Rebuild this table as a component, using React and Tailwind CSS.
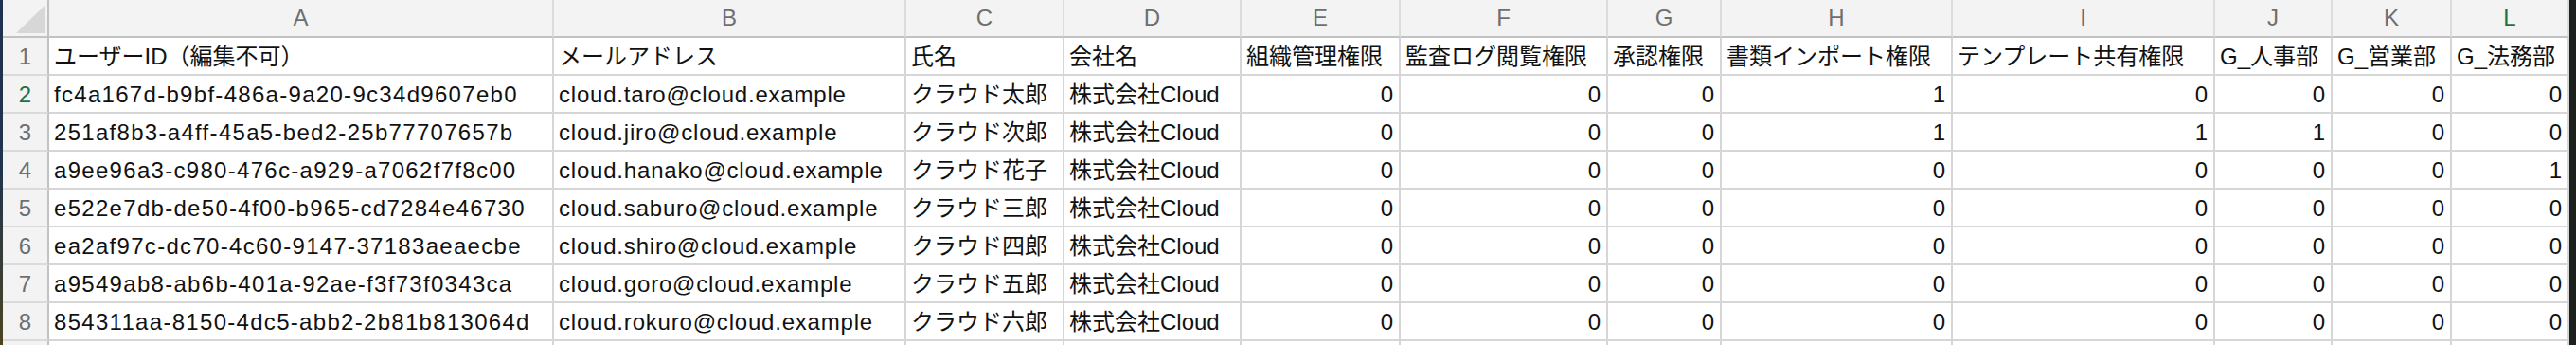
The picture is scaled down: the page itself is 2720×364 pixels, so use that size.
import React from "react";

const COLS = ["A", "B", "C", "D", "E", "F", "G", "H", "I", "J", "K", "L"];

const HEADER = [
  "ユーザーID（編集不可）",
  "メールアドレス",
  "氏名",
  "会社名",
  "組織管理権限",
  "監査ログ閲覧権限",
  "承認権限",
  "書類インポート権限",
  "テンプレート共有権限",
  "G_人事部",
  "G_営業部",
  "G_法務部",
];

const ROWS = [
  ["fc4a167d-b9bf-486a-9a20-9c34d9607eb0", "cloud.taro@cloud.example", "クラウド太郎", [0, 0, 0, 1, 0, 0, 0, 0]],
  ["251af8b3-a4ff-45a5-bed2-25b77707657b", "cloud.jiro@cloud.example", "クラウド次郎", [0, 0, 0, 1, 1, 1, 0, 0]],
  ["a9ee96a3-c980-476c-a929-a7062f7f8c00", "cloud.hanako@cloud.example", "クラウド花子", [0, 0, 0, 0, 0, 0, 0, 1]],
  ["e522e7db-de50-4f00-b965-cd7284e46730", "cloud.saburo@cloud.example", "クラウド三郎", [0, 0, 0, 0, 0, 0, 0, 0]],
  ["ea2af97c-dc70-4c60-9147-37183aeaecbe", "cloud.shiro@cloud.example", "クラウド四郎", [0, 0, 0, 0, 0, 0, 0, 0]],
  ["a9549ab8-ab6b-401a-92ae-f3f73f0343ca", "cloud.goro@cloud.example", "クラウド五郎", [0, 0, 0, 0, 0, 0, 0, 0]],
  ["854311aa-8150-4dc5-abb2-2b81b813064d", "cloud.rokuro@cloud.example", "クラウド六郎", [0, 0, 0, 0, 0, 0, 0, 0]],
];

const font = { fontFamily: '"Liberation Sans", "Noto Sans CJK JP", sans-serif' };

function TextCell({ children, track = "" }) {
  return (
    <div
      className={
        "h-[40px] border-r-2 border-b-2 border-[#d6d6d6] bg-white pl-[5px] pt-[1px] text-[24px] leading-[38px] text-[#111] whitespace-nowrap overflow-hidden " +
        track
      }
    >
      {children}
    </div>
  );
}

function NumCell({ children }) {
  return (
    <div className="h-[40px] border-r-2 border-b-2 border-[#d6d6d6] bg-white pr-[6px] pt-[1px] text-right text-[24px] leading-[38px] text-[#111] whitespace-nowrap overflow-hidden">
      {children}
    </div>
  );
}

function RowHead({ n, active }) {
  return (
    <div
      className={
        "h-[40px] border-r-2 border-b-2 border-r-[#c2c2c2] border-b-[#dadada] bg-[#f3f3f3] pt-[1px] text-center text-[24px] leading-[38px] " +
        (active ? "text-[#1e7145]" : "text-[#6f6f6f]")
      }
    >
      {n}
    </div>
  );
}

export default function App() {
  return (
    <div className="flex h-[364px] w-[2720px] overflow-hidden bg-white" style={font}>
      <div className="w-[3px] shrink-0 bg-linear-to-b from-[#1d3250] via-[#22344a] to-[#4a4420]" />
      <div className="grid shrink-0 grid-cols-[49px_533px_372px_167px_187px_168px_219px_120px_244px_277px_124px_126px_124px] content-start">
        {/* column header row */}
        <div className="relative h-[40px] border-r-2 border-b-2 border-[#c2c2c2] bg-[#f3f3f3]">
          <svg className="absolute right-[3px] bottom-[3px]" width="30" height="29" viewBox="0 0 30 29">
            <polygon points="0,29 30,29 30,0" fill="#d7d7d7" />
          </svg>
        </div>
        {COLS.map((c) => (
          <div
            key={c}
            className={
              "h-[40px] border-r-2 border-b-2 border-r-[#dcdcdc] border-b-[#c2c2c2] bg-[#f3f3f3] text-center text-[24px] leading-[38px] " +
              (c === "L" ? "text-[#1e7145]" : "text-[#6f6f6f]")
            }
          >
            {c}
          </div>
        ))}

        {/* row 1: headers */}
        <RowHead n={1} />
        {HEADER.map((h) => (
          <TextCell key={h}>{h}</TextCell>
        ))}

        {ROWS.map((r, i) => (
          <React.Fragment key={r[0]}>
            <RowHead n={i + 2} active={i === 0} />
            <TextCell track="tracking-[1.3px]">{r[0]}</TextCell>
            <TextCell track="tracking-[0.8px]">{r[1]}</TextCell>
            <TextCell>{r[2]}</TextCell>
            <TextCell>株式会社Cloud</TextCell>
            {r[3].map((v, j) => (
              <NumCell key={j}>{v}</NumCell>
            ))}
          </React.Fragment>
        ))}

        {/* partial row 9 */}
        <RowHead n="" />
        {COLS.map((c) => (
          <TextCell key={"r9" + c}>{""}</TextCell>
        ))}
      </div>
      <div className="flex-1 bg-[#1c211d]" />
    </div>
  );
}
